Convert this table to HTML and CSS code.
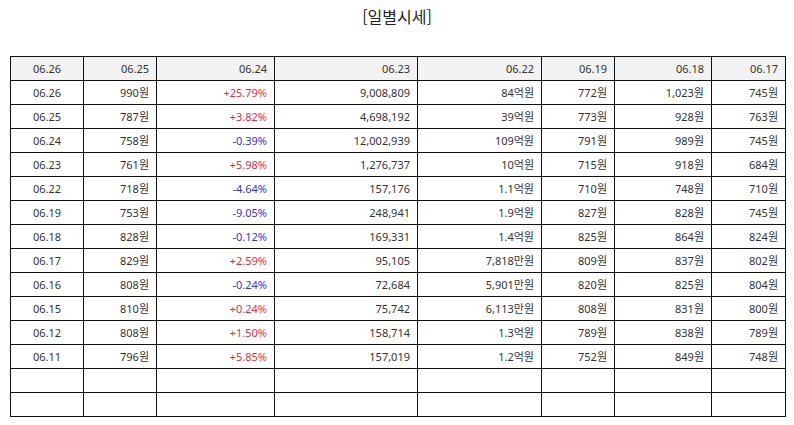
FILE: index.html
```html
<!DOCTYPE html>
<html lang="ko">
<head>
<meta charset="utf-8">
<link rel="stylesheet" href="styles.css">
</head>
<body>
<div class="page">
  <h1 class="title">[일별시세]</h1>
  <table class="daily">
    <colgroup>
      <col class="c1"><col class="c2"><col class="c3"><col class="c4"><col class="c5"><col class="c6"><col class="c7"><col class="c8">
    </colgroup>
    <thead>
      <tr><th class="ctr">06.26</th><th>06.25</th><th>06.24</th><th>06.23</th><th>06.22</th><th>06.19</th><th>06.18</th><th>06.17</th></tr>
    </thead>
    <tbody>
      <tr><td class="ctr">06.26</td><td>990원</td><td class="up">+25.79%</td><td>9,008,809</td><td>84억원</td><td>772원</td><td>1,023원</td><td>745원</td></tr>
      <tr><td class="ctr">06.25</td><td>787원</td><td class="up">+3.82%</td><td>4,698,192</td><td>39억원</td><td>773원</td><td>928원</td><td>763원</td></tr>
      <tr><td class="ctr">06.24</td><td>758원</td><td class="down">-0.39%</td><td>12,002,939</td><td>109억원</td><td>791원</td><td>989원</td><td>745원</td></tr>
      <tr><td class="ctr">06.23</td><td>761원</td><td class="up">+5.98%</td><td>1,276,737</td><td>10억원</td><td>715원</td><td>918원</td><td>684원</td></tr>
      <tr><td class="ctr">06.22</td><td>718원</td><td class="down">-4.64%</td><td>157,176</td><td>1.1억원</td><td>710원</td><td>748원</td><td>710원</td></tr>
      <tr><td class="ctr">06.19</td><td>753원</td><td class="down">-9.05%</td><td>248,941</td><td>1.9억원</td><td>827원</td><td>828원</td><td>745원</td></tr>
      <tr><td class="ctr">06.18</td><td>828원</td><td class="down">-0.12%</td><td>169,331</td><td>1.4억원</td><td>825원</td><td>864원</td><td>824원</td></tr>
      <tr><td class="ctr">06.17</td><td>829원</td><td class="up">+2.59%</td><td>95,105</td><td>7,818만원</td><td>809원</td><td>837원</td><td>802원</td></tr>
      <tr><td class="ctr">06.16</td><td>808원</td><td class="down">-0.24%</td><td>72,684</td><td>5,901만원</td><td>820원</td><td>825원</td><td>804원</td></tr>
      <tr><td class="ctr">06.15</td><td>810원</td><td class="up">+0.24%</td><td>75,742</td><td>6,113만원</td><td>808원</td><td>831원</td><td>800원</td></tr>
      <tr><td class="ctr">06.12</td><td>808원</td><td class="up">+1.50%</td><td>158,714</td><td>1.3억원</td><td>789원</td><td>838원</td><td>789원</td></tr>
      <tr><td class="ctr">06.11</td><td>796원</td><td class="up">+5.85%</td><td>157,019</td><td>1.2억원</td><td>752원</td><td>849원</td><td>748원</td></tr>
      <tr><td></td><td></td><td></td><td></td><td></td><td></td><td></td><td></td></tr>
      <tr><td></td><td></td><td></td><td></td><td></td><td></td><td></td><td></td></tr>
    </tbody>
  </table>
</div>
</body>
</html>
```

FILE: styles.css
```css
html, body {
  margin: 0;
  padding: 0;
  background: #fff;
}
.page {
  padding: 6px 10px 0 10px;
  font-family: "Noto Sans", "Noto Sans CJK KR", sans-serif;
  color: #333;
}
.title {
  margin: 0 0 29px 0;
  font-size: 16px;
  line-height: 21px;
  font-weight: normal;
  text-align: center;
  color: #222;
  font-family: "Noto Sans CJK KR", sans-serif;
}
.daily {
  border-collapse: collapse;
  table-layout: fixed;
  width: 775px;
  font-size: 11px;
}
.c1 { width: 73px; }
.c2 { width: 73px; }
.c3 { width: 118px; }
.c4 { width: 143px; }
.c5 { width: 124px; }
.c6 { width: 73px; }
.c7 { width: 97px; }
.c8 { width: 74px; }
.daily th, .daily td {
  border: 1px solid #111;
  height: 24px;
  padding: 0 7px 0 4px;
  text-align: right;
  font-weight: normal;
  white-space: nowrap;
  box-sizing: border-box;
  line-height: 14px;
}
.daily th {
  background: #f2f2f2;
}
.daily .ctr {
  text-align: center;
  padding: 0;
}
.daily .up { color: #e0303e; }
.daily .down { color: #3434c8; }
```
